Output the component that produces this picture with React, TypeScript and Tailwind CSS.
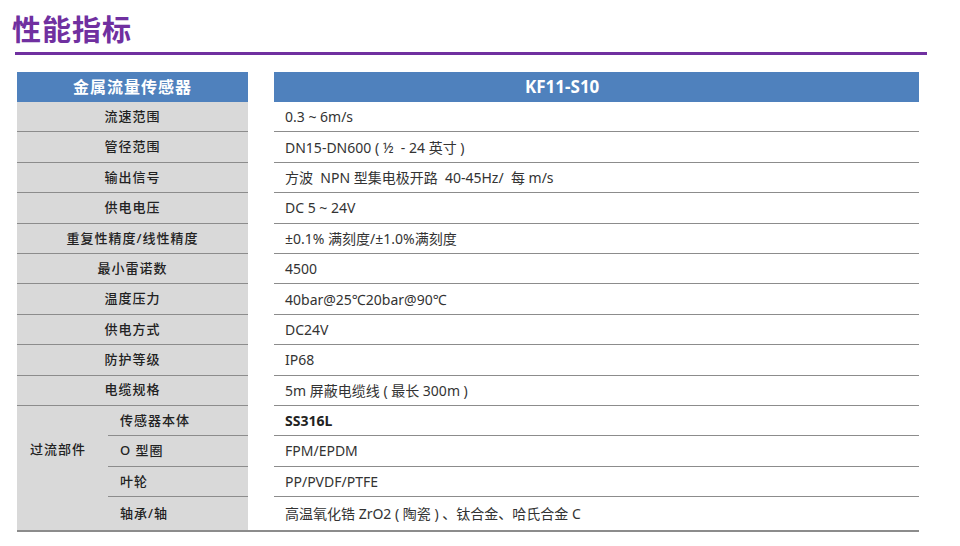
const rows: [string, string][] = [
  ['流速范围', '0.3 ~ 6m/s'],
  ['管径范围', 'DN15-DN600 ( ½  - 24 英寸 )'],
  ['输出信号', '方波  NPN 型集电极开路  40-45Hz/  每 m/s'],
  ['供电电压', 'DC 5 ~ 24V'],
  ['重复性精度/线性精度', '±0.1% 满刻度/±1.0%满刻度'],
  ['最小雷诺数', '4500'],
  ['温度压力', '40bar@25℃20bar@90℃'],
  ['供电方式', 'DC24V'],
  ['防护等级', 'IP68'],
  ['电缆规格', '5m 屏蔽电缆线 ( 最长 300m )'],
];

const parts: [string, string][] = [
  ['传感器本体', 'SS316L'],
  ['O 型圈', 'FPM/EPDM'],
  ['叶轮', 'PP/PVDF/PTFE'],
  ['轴承/轴', '高温氧化锆 ZrO2 ( 陶瓷 ) 、钛合金、哈氏合金 C'],
];

const font = { fontFamily: '"Noto Sans", "Noto Sans CJK SC", sans-serif' };

export default function App() {
  return (
    <div className="w-[960px] h-[546px] bg-white text-[13px] text-[#333]" style={font}>
      <div className="px-[12px] pt-[11px]">
        <h1 className="text-[29px] leading-[38px] font-semibold text-[#7030a0] tracking-[1px]">性能指标</h1>
      </div>
      <div className="ml-[15px] w-[912px] h-[3px] mt-[3px] bg-[#7030a0]" />

      <div className="ml-[17px] mt-[17px] w-[902px]">
        <div className="flex h-[30px] text-white font-bold">
          <div className="w-[231px] bg-[#4f81bd] flex items-center justify-center text-[16px] tracking-[1px]">
            金属流量传感器
          </div>
          <div className="w-[26px]" />
          <div className="flex-1 bg-[#4f81bd] flex items-center pl-[251px] text-[17px]">KF11-S10</div>
        </div>

        {rows.map(([k, v]) => (
          <div key={k} className="flex h-[30.4px]">
            <div className="w-[231px] bg-[#d9d9d9] border-b border-[#8c8c8c] flex items-center justify-center font-medium text-[#222] tracking-[1px]">
              {k}
            </div>
            <div className="w-[26px]" />
            <div className="flex-1 border-b border-[#8c8c8c] flex items-center pl-[11px] whitespace-pre text-[14px]">{v}</div>
          </div>
        ))}

        <div className="flex border-b-2 border-[#8c8c8c]">
          <div className="w-[91px] bg-[#d9d9d9] pt-[34px] pl-[13px] font-medium text-[#222] tracking-[1px]">
            过流部件
          </div>
          <div className="w-[140px] bg-[#d9d9d9] flex flex-col">
            {parts.map(([k], i) => (
              <div
                key={k}
                className={`${i < 3 ? 'h-[30.4px] border-b border-[#8c8c8c]' : 'h-[33px]'} flex items-center pl-[12px] font-medium text-[#222] tracking-[1px] whitespace-pre`}
              >
                {k}
              </div>
            ))}
          </div>
          <div className="w-[26px]" />
          <div className="flex-1 flex flex-col">
            {parts.map(([k, v], i) => (
              <div
                key={k}
                className={`${i < 3 ? 'h-[30.4px] border-b border-[#8c8c8c]' : 'h-[33px]'} flex items-center pl-[11px] whitespace-pre text-[14px] ${i === 0 ? 'font-bold text-[#222]' : ''}`}
              >
                {v}
              </div>
            ))}
          </div>
        </div>
      </div>
    </div>
  );
}
